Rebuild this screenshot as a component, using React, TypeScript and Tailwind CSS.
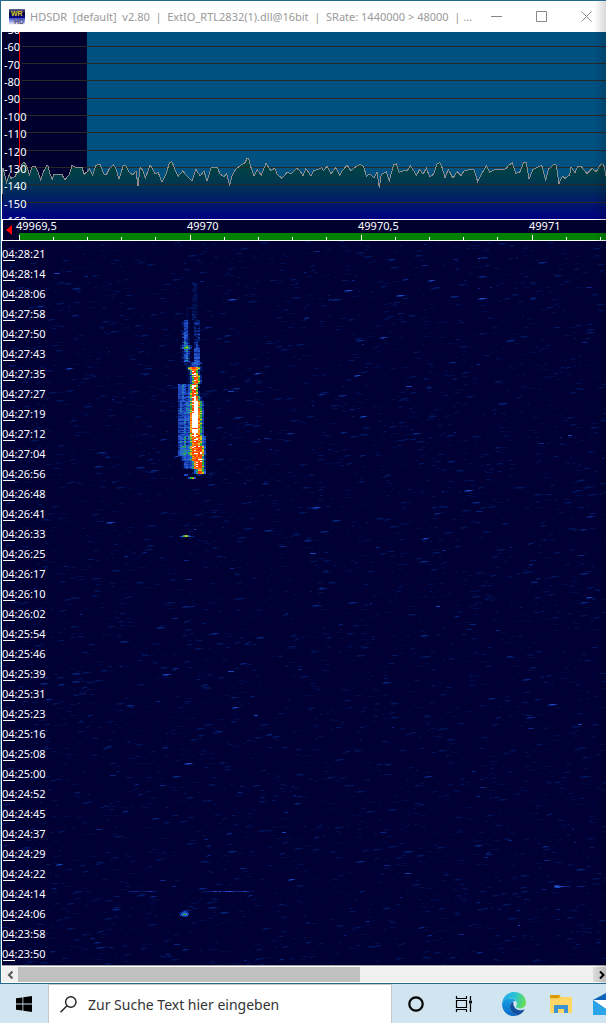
import { useMemo } from "react";

const TIMES = [
  "04:28:21", "04:28:14", "04:28:06", "04:27:58", "04:27:50", "04:27:43",
  "04:27:35", "04:27:27", "04:27:19", "04:27:12", "04:27:04", "04:26:56",
  "04:26:48", "04:26:41", "04:26:33", "04:26:25", "04:26:17", "04:26:10",
  "04:26:02", "04:25:54", "04:25:46", "04:25:39", "04:25:31", "04:25:23",
  "04:25:16", "04:25:08", "04:25:00", "04:24:52", "04:24:45", "04:24:37",
  "04:24:29", "04:24:22", "04:24:14", "04:24:06", "04:23:58", "04:23:50",
];

const LEVELS = [-50, -60, -70, -80, -90, -100, -110, -120, -130, -140, -150, -160];
const GRID_LINES = [14, 31, 48, 66, 83, 100, 118, 135, 152, 170];
const FREQUENCIES = ["49969,5", "49970", "49970,5", "49971"];

// noise floor samples, x y pairs in thirds of a pixel
const TRACE =
  "8 207 9 130 20 172 28 148 32 160 45 155 52 140 60 135 66 118 72 112 80 122 88 150 96 125 106 125 114 140 122 165 130 140 140 122 144 122 150 148 157 162 162 148 185 147 195 165 208 148 216 121 226 127 247 128 252 148 262 140 268 130 278 151 288 121 300 118 312 148 320 147 330 128 340 120 347 128 357 163 370 121 377 122 386 140 398 150 408 138 414 182 420 128 428 135 436 160 450 121 456 128 465 146 475 143 486 172 500 142 508 113 516 110 526 138 535 153 548 138 560 153 576 168 588 133 600 153 612 138 621 169 634 126 652 126 660 147 672 155 680 145 689 182 697 150 708 132 722 121 735 113 741 100 746 101 752 125 762 152 772 135 784 150 798 115 812 137 824 130 832 148 846 160 862 141 872 147 890 130 900 137 909 152 917 132 923 138 933 154 941 137 953 134 965 128 971 137 981 124 993 147 1007 128 1019 152 1027 137 1041 121 1053 137 1067 125 1081 118 1091 125 1099 154 1109 147 1122 160 1131 140 1138 190 1144 148 1159 140 1168 167 1181 118 1189 117 1197 142 1213 137 1221 138 1231 122 1241 137 1249 152 1259 133 1269 148 1279 130 1289 155 1301 148 1312 115 1320 113 1327 130 1335 158 1345 133 1359 160 1371 140 1383 152 1393 137 1421 132 1433 170 1443 150 1459 122 1469 142 1485 133 1517 132 1527 120 1537 113 1547 145 1559 142 1571 113 1579 112 1587 163 1599 133 1625 121 1637 167 1645 133 1663 117 1669 120 1677 176 1687 153 1695 160 1709 150 1713 125 1725 143 1733 124 1743 124 1761 146 1777 130 1789 140 1804 115 1811 120 1818 152";

const tracePoints = () => {
  const n = TRACE.split(" ").map(Number);
  const points: string[] = [];
  for (let i = 0; i < n.length; i += 2) {
    points.push(`${(n[i] / 3 - 2).toFixed(1)},${(93 + n[i + 1] / 3).toFixed(1)}`);
  }
  return points.join(" ");
};

const PALETTE = [
  "#00073e",
  "#000d4a",
  "#00175e",
  "#08247e",
  "#1a44b8",
  "#2a5cd4",
  "#22889a",
  "#2fae2f",
  "#d8c020",
  "#ff7a10",
  "#ff3c00",
  "#ffffff",
];

// meteor echo: first row, last row, one hex level for every 2px column
const ECHO_X = 176;
const ECHO: [number, number, string][] = [
  [42, 66, "00000001210000"],
  [66, 79, "00001002210000"],
  [79, 91, "00244100333000"],
  [91, 104, "00354200333000"],
  [104, 108, "02467530343000"],
  [108, 121, "00245300444000"],
  [121, 126, "00022334554300"],
  [126, 129, "0000279aa87300"],
  [129, 134, "0000026aa73000"],
  [134, 143, "00001247a97300"],
  [143, 155, "4454347aa73000"],
  [155, 160, "4454457aba7300"],
  [160, 172, "3544557abb9740"],
  [172, 192, "4445459bbb9740"],
  [192, 195, "3444448aba9640"],
  [195, 205, "45464579aa9854"],
  [205, 215, "4566568aaaaa84"],
  [215, 220, "02454569aaaa73"],
  [220, 228, "001443469aaa73"],
  [228, 233, "00000002469974"],
  [233, 235, "00044000023200"],
  [236, 238, "00000477400000"],
];

interface Blip {
  x: number;
  y: number;
  levels: string;
}

const BLIPS: Blip[] = [
  { x: 167, y: 295, levels: "22000" },
  { x: 177, y: 294, levels: "02686200" },
  { x: 177, y: 295, levels: "35787432" },
  { x: 126, y: 650, levels: "2333322223343220" },
  { x: 201, y: 650, levels: "22333443433445433333443221" },
  { x: 178, y: 670, levels: "0343" },
  { x: 178, y: 671, levels: "3444" },
  { x: 177, y: 672, levels: "24654" },
  { x: 177, y: 673, levels: "35774" },
  { x: 178, y: 674, levels: "4545" },
  { x: 180, y: 675, levels: "343" },
  { x: 552, y: 644, levels: "343" },
  { x: 552, y: 645, levels: "45444333" },
  { x: 552, y: 646, levels: "3442" },
  { x: 574, y: 645, levels: "23332" },
  { x: 402, y: 632, levels: "2442" },
  { x: 182, y: 319, levels: "332" },
];

function drawWaterfall() {
  let seed = 49970;
  const random = () => {
    seed = (seed * 1664525 + 1013904223) % 4294967296;
    return seed / 4294967296;
  };
  const noise = PALETTE.map(() => "");
  const signal = PALETTE.map(() => "");

  for (let i = 0; i < 5600; i++) {
    const x = Math.floor(random() * 302) * 2;
    const y = Math.floor(random() * 724);
    const w = 2 + Math.floor(random() * 3) * 2;
    const strength = random();
    const level = strength > 0.994 ? 4 : strength > 0.95 ? 3 : strength > 0.75 ? 2 : strength > 0.35 ? 1 : 0;
    noise[level] += `M${x} ${y}h${w}v1h${-w}z`;
    // stronger specks bleed into the neighbouring bins
    if (level > 1 && random() > 0.4) {
      noise[level - 1] += `M${x - 2} ${y + 1}h${w}v1h${-w}z`;
      noise[level - 2] += `M${x - 2} ${y}h${w + 4}v1h${-w - 4}z`;
    }
  }

  ECHO.forEach(([top, bottom, row]) => {
    for (let y = top; y < bottom; y++) {
      const fade = random() * 1.6 - 0.9;
      for (let i = 0; i < row.length; i++) {
        const base = parseInt(row[i], 16);
        if (base === 0 || (base < 4 && random() > 0.85)) continue;
        const spread = base === 11 ? 0.4 : 1;
        const level = Math.round(base + (fade + random() * 1.4 - 0.7) * spread);
        signal[Math.max(0, Math.min(11, level))] += `M${ECHO_X + i * 2} ${y}h2v1h-2z`;
      }
    }
  });

  BLIPS.forEach(({ x, y, levels }) => {
    levels.split("").forEach((l, i) => {
      if (l !== "0") signal[Number(l)] += `M${x + i * 2} ${y}h2v1h-2z`;
    });
  });

  return [...noise, ...signal];
}

function TitleBar() {
  return (
    <header className="flex h-[31px] items-center overflow-hidden bg-white pl-2 text-[#999]">
      <svg width="16" height="16" viewBox="0 0 16 16" className="shrink-0">
        <defs>
          <linearGradient id="logoTop" x2="0" y2="1">
            <stop offset="0" stopColor="#6b6b9c" />
            <stop offset=".45" stopColor="#050538" />
            <stop offset="1" stopColor="#0a0a90" />
          </linearGradient>
          <linearGradient id="logoBottom" x2="0" y2="1">
            <stop offset="0" stopColor="#3a48c8" />
            <stop offset="1" stopColor="#fff" />
          </linearGradient>
        </defs>
        <rect width="16" height="9" fill="url(#logoTop)" />
        <rect y="9" width="16" height="7" fill="url(#logoBottom)" />
        <text x="2" y="7" fontSize="7" fontWeight="bold" fontFamily="Liberation Sans" fill="#d8cc30">
          WR
        </text>
        <text x="5" y="15" fontSize="7" fontWeight="bold" fontFamily="Liberation Sans" fill="#555577">
          HD
        </text>
      </svg>
      <h1 className="ml-[5px] min-w-0 flex-1 overflow-hidden text-[11px] leading-4 whitespace-pre">
        {"HDSDR  [default]  v2.80  |  ExtIO_RTL2832(1).dll@16bit  |  SRate: 1440000 > 48000  | ..."}
      </h1>
      <div className="-mr-[3px] flex h-full shrink-0">
        <button aria-label="Minimize" className="flex w-[45px] items-center justify-center">
          <svg width="11" height="11" stroke="#888" fill="none">
            <path d="M0 5.5h11" />
          </svg>
        </button>
        <button aria-label="Maximize" className="flex w-[45px] items-center justify-center">
          <svg width="11" height="11" stroke="#888" fill="none">
            <path d="M.5.5h10v10H.5z" />
          </svg>
        </button>
        <button aria-label="Close" className="flex w-[45px] items-center justify-center">
          <svg width="11" height="11" stroke="#888" fill="none">
            <path d="M.5.5l10 10M10.5.5l-10 10" />
          </svg>
        </button>
      </div>
    </header>
  );
}

function Spectrum() {
  const points = tracePoints();

  return (
    <section className="relative h-[187px] overflow-hidden bg-[#005080]">
      <svg
        className="block h-full w-full"
        viewBox="0 0 604 187"
        preserveAspectRatio="none"
        shapeRendering="crispEdges"
      >
        <defs>
          <linearGradient id="floor" gradientUnits="userSpaceOnUse" x1="0" y1="125" x2="0" y2="187">
            <stop offset="0" stopColor="#004a38" />
            <stop offset=".4" stopColor="#003850" />
            <stop offset="1" stopColor="#000080" />
          </linearGradient>
        </defs>
        <rect width="85" height="187" fill="#00002f" />
        <polygon points={`0,187 ${points} 604,187`} fill="url(#floor)" />
        {GRID_LINES.map((y) => (
          <path key={y} d={`M20 ${y + 0.5}H604`} stroke="#282828" />
        ))}
        <path d="M17 0h1v135h-1z" fill="#f00" />
        <polyline points={points} fill="none" stroke="#8c8c8c" />
      </svg>
      <div className="absolute -top-[10px] left-[2px] flex h-[207px] flex-col justify-between">
        {LEVELS.map((level) => (
          <span key={level} className="text-[11px] leading-4">
            {level}
          </span>
        ))}
      </div>
    </section>
  );
}

function FrequencyScale() {
  return (
    <section className="flex h-[22px] overflow-hidden border-y border-l border-white bg-[#00002f]">
      <button aria-label="Scroll down" className="flex w-4 shrink-0 items-center pl-[3px]">
        <svg width="6" height="10">
          <path d="M6 0v10L0 5z" fill="#f00" />
        </svg>
      </button>
      <div className="flex min-w-0 flex-1 bg-[linear-gradient(#00002f_13px,#008000_13px)]">
        {FREQUENCIES.map((f) => (
          <div key={f} className="w-[171px] shrink-0">
            <div className="-ml-[3px] h-[13px] text-[11px] leading-3">{f}</div>
            <div className="flex h-[7px] items-end">
              <i className="h-[5px] w-[34px] border-l border-white" />
              <i className="h-[3px] w-[34px] border-l border-white" />
              <i className="h-[3px] w-[34px] border-l border-white" />
              <i className="h-[3px] w-[34px] border-l border-white" />
              <i className="h-[3px] w-[34px] border-l border-white" />
            </div>
          </div>
        ))}
      </div>
    </section>
  );
}

function Waterfall() {
  const layers = useMemo(drawWaterfall, []);

  return (
    <section className="relative flex-1 overflow-hidden bg-[#000035] pb-1">
      <svg
        className="absolute inset-0 h-full w-full"
        viewBox="0 0 604 724"
        preserveAspectRatio="none"
        shapeRendering="crispEdges"
      >
        {layers.map((d, i) => (
          <path key={i} d={d} fill={PALETTE[i % PALETTE.length]} />
        ))}
      </svg>
      <ol className="relative">
        {TIMES.map((time) => (
          <li key={time} className="flex h-5 flex-col justify-end">
            <time className="text-[11px] leading-3">{time}</time>
            <i className="ml-px h-px w-3 bg-white" />
          </li>
        ))}
      </ol>
    </section>
  );
}

function ScrollBar() {
  return (
    <div className="flex h-[18px] border-y border-t-[#a0a0a0] border-b-white bg-white pt-px">
      <button aria-label="Left" className="flex w-4 shrink-0 items-center justify-center bg-[#f0f0f0]">
        <svg width="7" height="8" fill="none" stroke="#555" strokeWidth="2">
          <path d="M5.5 0.5L2 4l3.5 3.5" />
        </svg>
      </button>
      <div className="flex-1 bg-[#f0f0f0]">
        <div className="h-full w-[59.5%] bg-[#c0c0c0]" />
      </div>
      <button aria-label="Right" className="flex w-[13px] shrink-0 items-center justify-end bg-[#dadada]">
        <svg width="8" height="8" fill="none" stroke="#000" strokeWidth="2">
          <path d="M2 0.5L5.5 4 2 7.5" />
        </svg>
      </button>
    </div>
  );
}

function TaskBar() {
  return (
    <footer className="flex h-10 overflow-hidden bg-[#d0e5ef]">
      <button aria-label="Start" className="flex w-12 shrink-0 items-center justify-center">
        <svg width="16" height="16" viewBox="0 0 16 16">
          <path d="M0 2.3L6.5 1.4V7.6H0zM7.3 1.2L16 0V7.6H7.3zM0 8.4H6.5V14.6L0 13.7zM7.3 8.4H16V16L7.3 14.8z" />
        </svg>
      </button>
      <label className="flex w-[344px] shrink-0 items-center border-x border-t border-[#c4c8ca] bg-white pl-[11px]">
        <svg width="17" height="17" viewBox="0 0 17 17" fill="none" stroke="#222" strokeWidth="1.4">
          <circle cx="10.8" cy="6" r="5.2" />
          <path d="M7 9.8L.5 16.3" />
        </svg>
        <input
          aria-label="Suche"
          placeholder="Zur Suche Text hier eingeben"
          className="ml-[11px] min-w-0 flex-1 text-sm outline-none placeholder:text-[#333]"
        />
      </label>
      <button aria-label="Cortana" className="flex w-12 shrink-0 items-center justify-center">
        <svg width="16" height="16" fill="none" stroke="#000" strokeWidth="2.2">
          <circle cx="8" cy="8" r="6.7" />
        </svg>
      </button>
      <button aria-label="Task view" className="flex w-12 shrink-0 items-center justify-center">
        <svg width="18" height="16" fill="none" stroke="#000" strokeWidth="1.2">
          <path d="M1.5 4.5h10v7h-10zM1.5 0v2.5h10V0M1.5 16v-2.5h10V16M15.5 0v4M15.5 8v8" />
          <path d="M14 4.5h3v3h-3z" fill="#000" stroke="none" />
        </svg>
      </button>
      <button aria-label="Edge" className="flex w-[52px] shrink-0 items-center justify-center">
        <svg width="24" height="24" viewBox="0 0 24 24">
          <defs>
            <linearGradient id="edgeTop" x1="0" y1=".3" x2="1" y2=".5">
              <stop offset="0" stopColor="#1fa8e8" />
              <stop offset=".5" stopColor="#2cc3d4" />
              <stop offset="1" stopColor="#66e052" />
            </linearGradient>
            <linearGradient id="edgeLeft" x2="0" y2="1">
              <stop offset="0" stopColor="#18a0e4" />
              <stop offset="1" stopColor="#0868c8" />
            </linearGradient>
          </defs>
          <path
            d="M.3 10.5C1.2 4.3 6 0 12 0c7 0 12 5 12 10.4 0 3.7-2.8 6-6 6-2.8 0-4.2-1-4.2-1.7 0-.5 1.1-1 1.1-3 0-2.7-2.8-5.2-6.5-5.2-4.3 0-7 2-8.1 4z"
            fill="url(#edgeTop)"
          />
          <path
            d="M.1 12C.1 8.5 4 6.5 8 6.5c3.5 0 5.3 1.5 6 3-3-.8-6 1.3-6 5.2 0 4.5 3.5 7.8 8 8.5-1.2.5-2.6.8-4 .8C5 24 0 18.5.1 12z"
            fill="url(#edgeLeft)"
          />
          <path
            d="M8 14.7c0-2.4 1.3-4.4 3.3-5.2-.7 4.5 2.5 8.7 6.7 8.7 2.3 0 3.5-.8 4-.8.4 0 .5.4.2.9-1.3 2.2-3.5 4-6.2 4.9-4.5-.7-8-4-8-8.5z"
            fill="#104f9e"
          />
        </svg>
      </button>
      <button aria-label="Explorer" className="flex w-[42px] shrink-0 items-center justify-center">
        <svg width="22" height="20" viewBox="0 0 22 20">
          <path d="M0 1.5Q0 1 1 1h8.5l1.5 2H22v15q0 1-1 1H1q-1 0-1-1z" fill="#f7c64b" />
          <path d="M1 1h8.5l.5 1.5L8.5 4H0V2q0-1 1-1z" fill="#dd9a08" />
          <path d="M0 5h9l2-2h11v15q0 1-1 1H1q-1 0-1-1z" fill="#ffd766" />
          <path d="M4 19v-7q0-1 1-1h12q1 0 1 1v7h-4v-4H8v4z" fill="#3c92d4" />
        </svg>
      </button>
      <button aria-label="Mail" className="flex w-12 shrink-0 items-center justify-center">
        <svg width="26" height="22" viewBox="0 0 26 22">
          <path d="M0 7L13 0l13 7v15H0z" fill="#0d63b8" />
          <path d="M0 7h26l-13 9z" fill="#fff" />
          <path d="M0 7l13 9 13-9v15H0z" fill="#2aa4e6" />
        </svg>
      </button>
    </footer>
  );
}

export default function App() {
  return (
    <div className="flex min-h-screen flex-col overflow-hidden font-['Noto_Sans','Open_Sans',sans-serif] text-white">
      <div className="relative flex flex-1 flex-col border border-r-0 border-[#24698f] bg-white">
        <TitleBar />
        <main className="flex flex-1 flex-col pl-px">
          <Spectrum />
          <FrequencyScale />
          <Waterfall />
          <ScrollBar />
        </main>
        <div className="pointer-events-none absolute inset-y-0 right-0 w-3 bg-linear-to-r from-transparent to-black/15" />
      </div>
      <TaskBar />
    </div>
  );
}
